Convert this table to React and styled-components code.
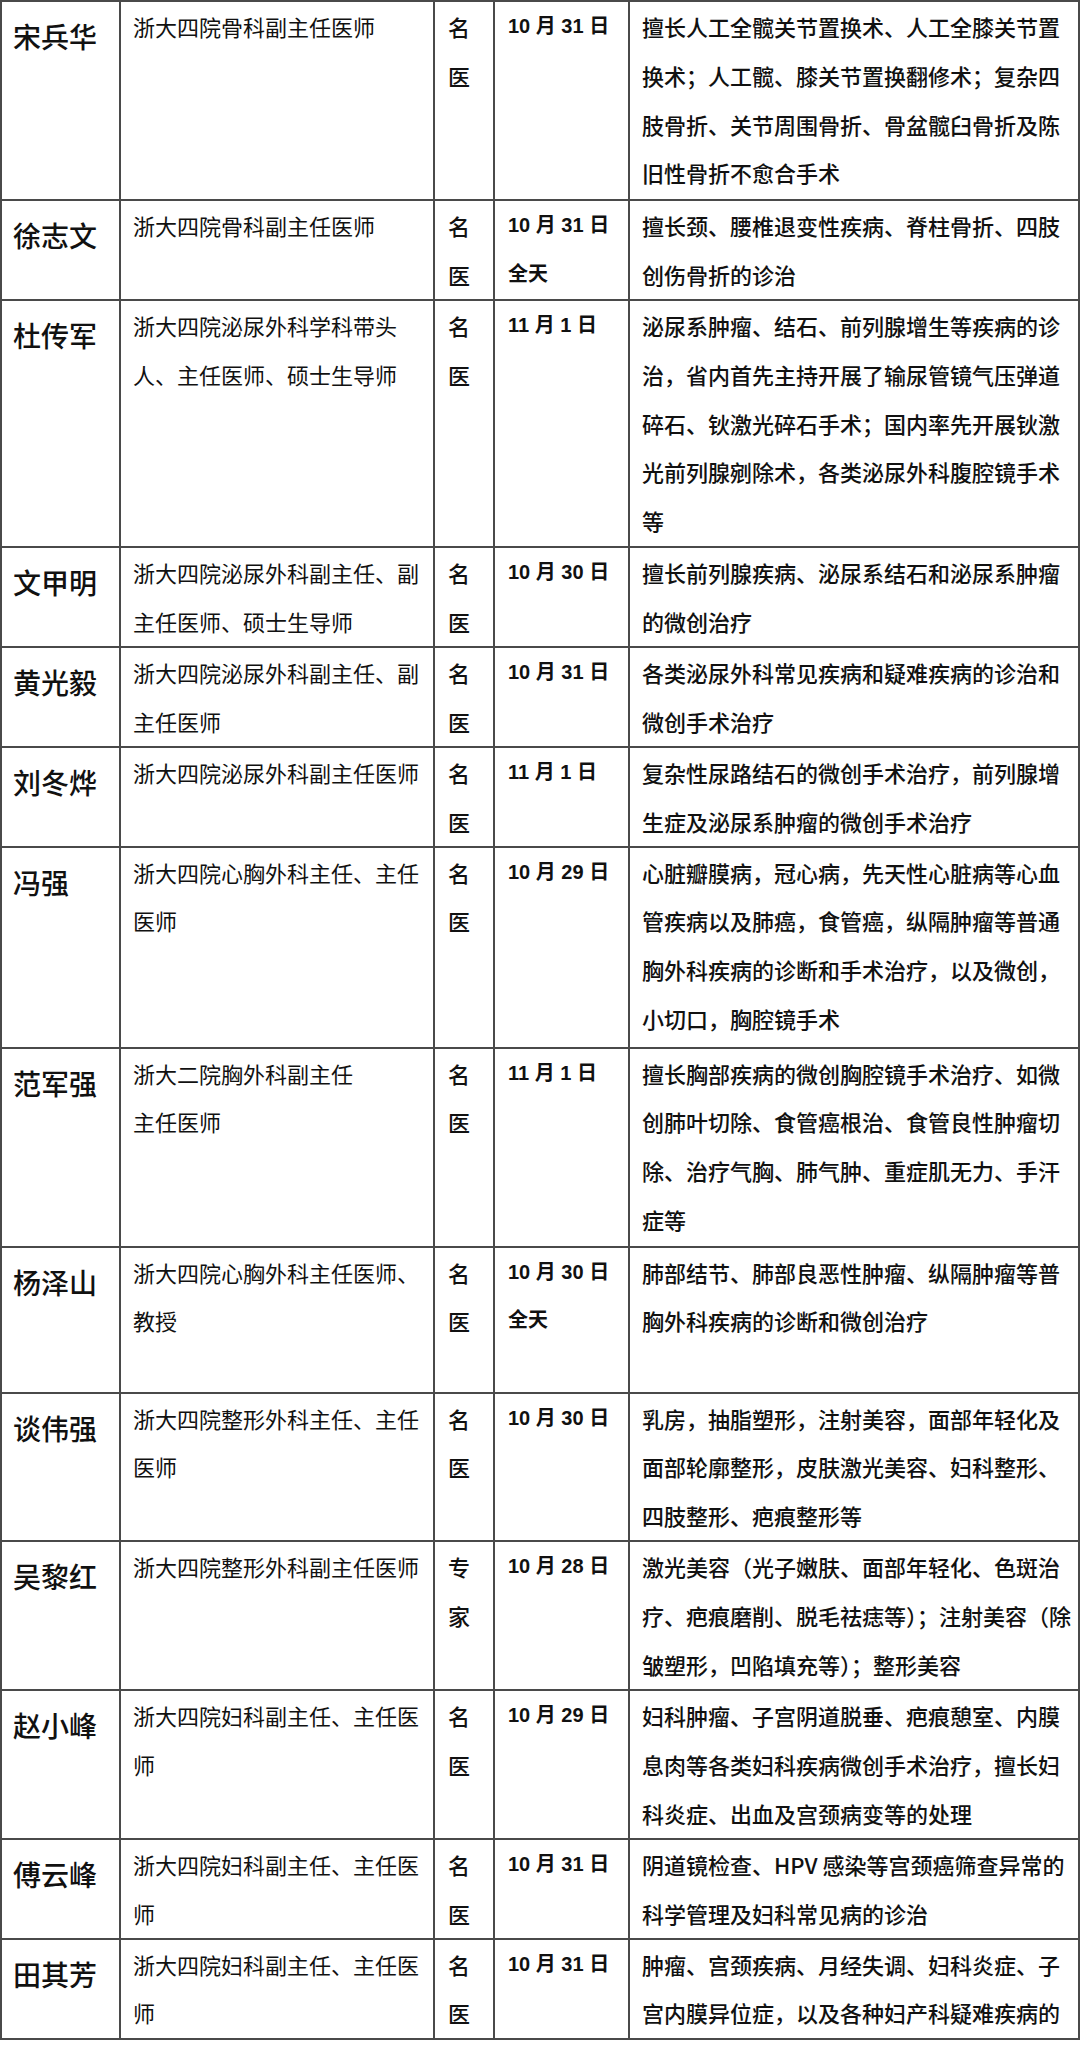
import React from 'react';
import styled, { createGlobalStyle } from 'styled-components';

const GlobalStyle = createGlobalStyle`
  body {
    margin: 0;
    background: #ffffff;
    font-family: 'Liberation Sans', 'Noto Sans CJK SC', sans-serif;
    color: #111111;
  }
`;

const LINE = 48.8;

const Table = styled.table`
  width: 1078px;
  border-collapse: collapse;
  table-layout: fixed;
`;

const Col = styled.col`
  width: ${(p) => p.$w}px;
`;

const Row = styled.tr`
  height: ${(p) => p.$h}px;
`;

const Cell = styled.td`
  border: 2px solid #4a4a4a;
  padding: 0 6px 0 12px;
  vertical-align: top;
  font-size: 22px;
  line-height: ${LINE}px;
  font-family: 'Noto Sans CJK SC', sans-serif;
  font-weight: 400;
  overflow: hidden;
`;

const NameCell = styled(Cell)`
  font-size: 28px;
  font-weight: 500;
  line-height: 50px;
  padding-top: 9px;
  padding-left: 11px;
`;

const TypeCell = styled(Cell)`
  font-weight: 500;
  padding-left: 13px;
`;

const DateCell = styled(Cell)`
  font-family: 'Liberation Sans', 'Noto Sans CJK SC', sans-serif;
  font-size: 20px;
  font-weight: 700;
  padding-left: 13px;
`;

const DescCell = styled(Cell)`
  font-weight: 500;
`;

const Line = styled.span`
  display: block;
  white-space: nowrap;
`;

const columns = [119, 314, 60, 135, 450];

const doctors = [
  {
    name: '宋兵华',
    org: ['浙大四院骨科副主任医师'],
    type: '名医',
    date: ['10 月 31 日'],
    desc: [
      '擅长人工全髋关节置换术、人工全膝关节置',
      '换术；人工髋、膝关节置换翻修术；复杂四',
      '肢骨折、关节周围骨折、骨盆髋臼骨折及陈',
      '旧性骨折不愈合手术',
    ],
    height: 199,
  },
  {
    name: '徐志文',
    org: ['浙大四院骨科副主任医师'],
    type: '名医',
    date: ['10 月 31 日', '全天'],
    desc: ['擅长颈、腰椎退变性疾病、脊柱骨折、四肢', '创伤骨折的诊治'],
    height: 100,
  },
  {
    name: '杜传军',
    org: ['浙大四院泌尿外科学科带头', '人、主任医师、硕士生导师'],
    type: '名医',
    date: ['11 月 1 日'],
    desc: [
      '泌尿系肿瘤、结石、前列腺增生等疾病的诊',
      '治，省内首先主持开展了输尿管镜气压弹道',
      '碎石、钬激光碎石手术；国内率先开展钬激',
      '光前列腺剜除术，各类泌尿外科腹腔镜手术',
      '等',
    ],
    height: 247,
  },
  {
    name: '文甲明',
    org: ['浙大四院泌尿外科副主任、副', '主任医师、硕士生导师'],
    type: '名医',
    date: ['10 月 30 日'],
    desc: ['擅长前列腺疾病、泌尿系结石和泌尿系肿瘤', '的微创治疗'],
    height: 100,
  },
  {
    name: '黄光毅',
    org: ['浙大四院泌尿外科副主任、副', '主任医师'],
    type: '名医',
    date: ['10 月 31 日'],
    desc: ['各类泌尿外科常见疾病和疑难疾病的诊治和', '微创手术治疗'],
    height: 100,
  },
  {
    name: '刘冬烨',
    org: ['浙大四院泌尿外科副主任医师'],
    type: '名医',
    date: ['11 月 1 日'],
    desc: ['复杂性尿路结石的微创手术治疗，前列腺增', '生症及泌尿系肿瘤的微创手术治疗'],
    height: 99,
  },
  {
    name: '冯强',
    org: ['浙大四院心胸外科主任、主任', '医师'],
    type: '名医',
    date: ['10 月 29 日'],
    desc: [
      '心脏瓣膜病，冠心病，先天性心脏病等心血',
      '管疾病以及肺癌，食管癌，纵隔肿瘤等普通',
      '胸外科疾病的诊断和手术治疗，以及微创，',
      '小切口，胸腔镜手术',
    ],
    height: 201,
  },
  {
    name: '范军强',
    org: ['浙大二院胸外科副主任', '主任医师'],
    type: '名医',
    date: ['11 月 1 日'],
    desc: [
      '擅长胸部疾病的微创胸腔镜手术治疗、如微',
      '创肺叶切除、食管癌根治、食管良性肿瘤切',
      '除、治疗气胸、肺气肿、重症肌无力、手汗',
      '症等',
    ],
    height: 199,
  },
  {
    name: '杨泽山',
    org: ['浙大四院心胸外科主任医师、', '教授'],
    type: '名医',
    date: ['10 月 30 日', '全天'],
    desc: ['肺部结节、肺部良恶性肿瘤、纵隔肿瘤等普', '胸外科疾病的诊断和微创治疗'],
    height: 146,
  },
  {
    name: '谈伟强',
    org: ['浙大四院整形外科主任、主任', '医师'],
    type: '名医',
    date: ['10 月 30 日'],
    desc: [
      '乳房，抽脂塑形，注射美容，面部年轻化及',
      '面部轮廓整形，皮肤激光美容、妇科整形、',
      '四肢整形、疤痕整形等',
    ],
    height: 148,
  },
  {
    name: '吴黎红',
    org: ['浙大四院整形外科副主任医师'],
    type: '专家',
    date: ['10 月 28 日'],
    desc: [
      '激光美容（光子嫩肤、面部年轻化、色斑治',
      '疗、疤痕磨削、脱毛祛痣等）；注射美容（除',
      '皱塑形，凹陷填充等）；整形美容',
    ],
    height: 149,
  },
  {
    name: '赵小峰',
    org: ['浙大四院妇科副主任、主任医', '师'],
    type: '名医',
    date: ['10 月 29 日'],
    desc: [
      '妇科肿瘤、子宫阴道脱垂、疤痕憩室、内膜',
      '息肉等各类妇科疾病微创手术治疗，擅长妇',
      '科炎症、出血及宫颈病变等的处理',
    ],
    height: 149,
  },
  {
    name: '傅云峰',
    org: ['浙大四院妇科副主任、主任医', '师'],
    type: '名医',
    date: ['10 月 31 日'],
    desc: ['阴道镜检查、HPV 感染等宫颈癌筛查异常的', '科学管理及妇科常见病的诊治'],
    height: 99,
  },
  {
    name: '田其芳',
    org: ['浙大四院妇科副主任、主任医', '师'],
    type: '名医',
    date: ['10 月 31 日'],
    desc: ['肿瘤、宫颈疾病、月经失调、妇科炎症、子', '宫内膜异位症，以及各种妇产科疑难疾病的'],
    height: 100,
  },
];

const Lines = ({ items }) => items.map((t, i) => <Line key={i}>{t}</Line>);

const App = () => (
  <>
    <GlobalStyle />
    <Table>
      <colgroup>
        {columns.map((w, i) => (
          <Col key={i} $w={w} />
        ))}
      </colgroup>
      <tbody>
        {doctors.map((d) => (
          <Row key={d.name} $h={d.height}>
            <NameCell>{d.name}</NameCell>
            <Cell>
              <Lines items={d.org} />
            </Cell>
            <TypeCell>
              <Lines items={d.type.split('')} />
            </TypeCell>
            <DateCell>
              <Lines items={d.date} />
            </DateCell>
            <DescCell>
              <Lines items={d.desc} />
            </DescCell>
          </Row>
        ))}
      </tbody>
    </Table>
  </>
);

export default App;
